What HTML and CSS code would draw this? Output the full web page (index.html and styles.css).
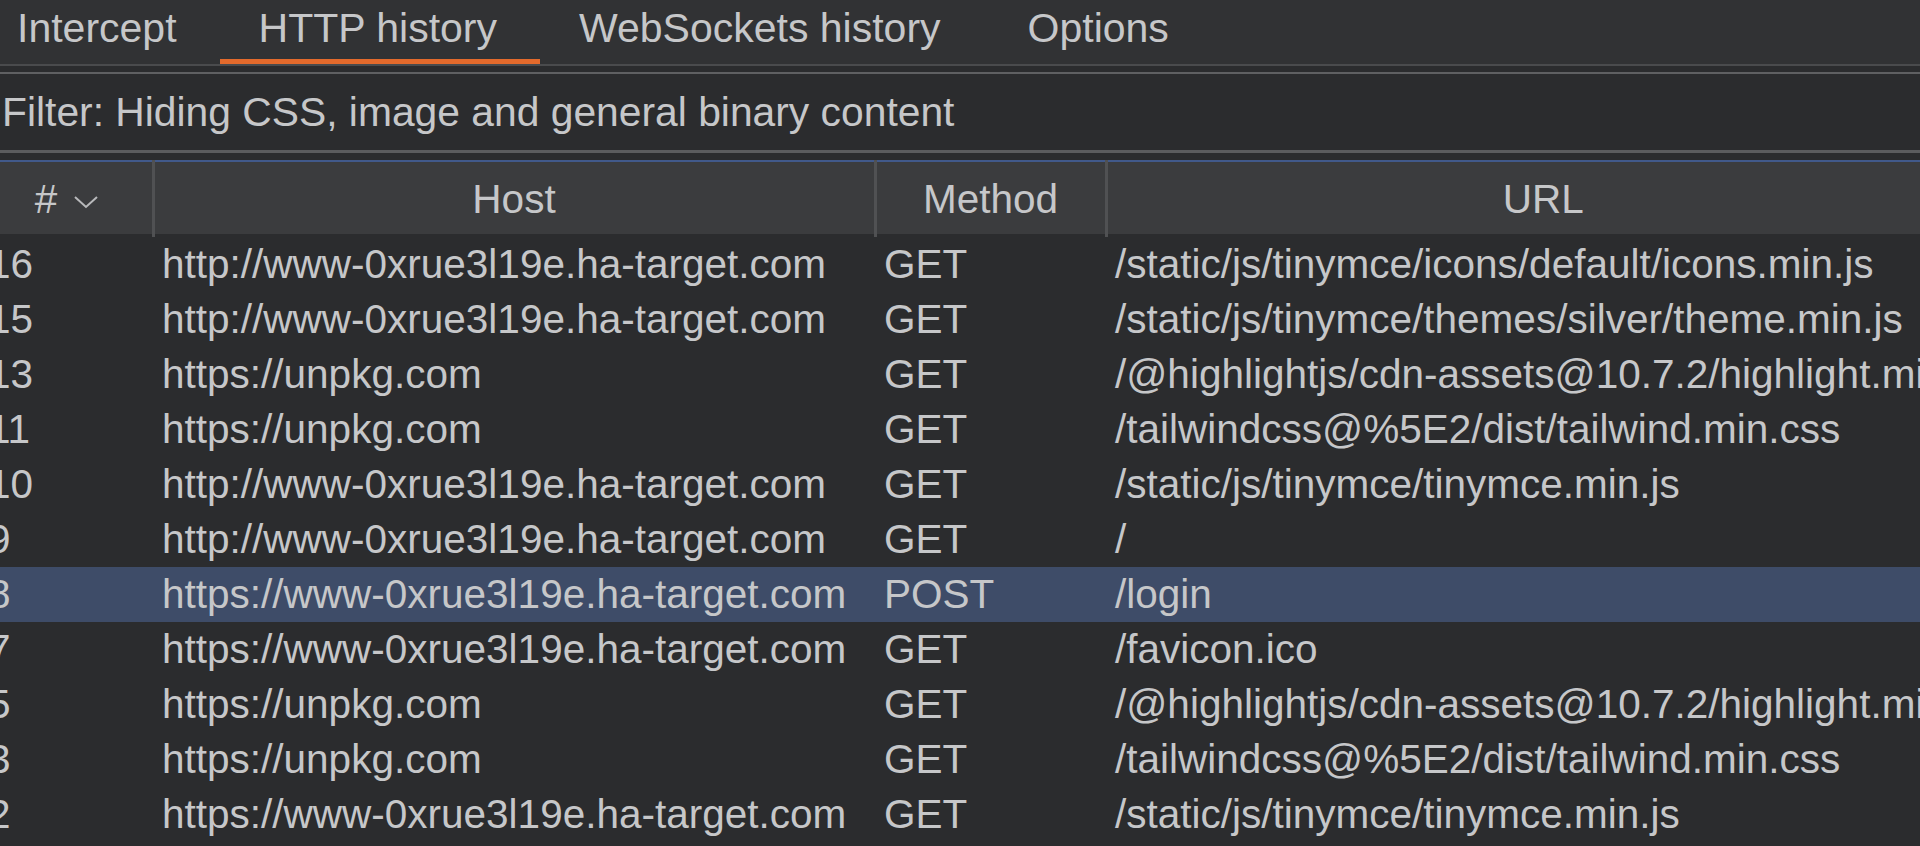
FILE: index.html
```html
<!DOCTYPE html>
<html lang="en">
<head>
  <meta charset="UTF-8">
  <title>HTTP history</title>
  <link rel="stylesheet" href="styles.css">
</head>
<body>

  <div class="tabs">
    <span class="tab">Intercept</span>
    <span class="tab active">HTTP history</span>
    <span class="tab">WebSockets history</span>
    <span class="tab">Options</span>
  </div>

  <div class="filter">Filter: Hiding CSS, image and general binary content</div>

  <table class="history">
    <colgroup>
      <col class="c-num">
      <col class="c-host">
      <col class="c-method">
      <col class="c-url">
    </colgroup>
    <thead>
      <tr>
        <th><span class="sort"># <svg width="26" height="14" viewBox="0 0 26 14"><polyline points="2,2 13,12 24,2" fill="none" stroke="#b8b9bb" stroke-width="2"/></svg></span></th>
        <th>Host</th>
        <th>Method</th>
        <th>URL</th>
      </tr>
    </thead>
    <tbody>
      <tr><td>16</td><td>http://www-0xrue3l19e.ha-target.com</td><td>GET</td><td>/static/js/tinymce/icons/default/icons.min.js</td></tr>
      <tr><td>15</td><td>http://www-0xrue3l19e.ha-target.com</td><td>GET</td><td>/static/js/tinymce/themes/silver/theme.min.js</td></tr>
      <tr><td>13</td><td>https://unpkg.com</td><td>GET</td><td>/@highlightjs/cdn-assets@10.7.2/highlight.min.js</td></tr>
      <tr><td>11</td><td>https://unpkg.com</td><td>GET</td><td>/tailwindcss@%5E2/dist/tailwind.min.css</td></tr>
      <tr><td>10</td><td>http://www-0xrue3l19e.ha-target.com</td><td>GET</td><td>/static/js/tinymce/tinymce.min.js</td></tr>
      <tr><td>9</td><td>http://www-0xrue3l19e.ha-target.com</td><td>GET</td><td>/</td></tr>
      <tr class="selected"><td>8</td><td>https://www-0xrue3l19e.ha-target.com</td><td>POST</td><td>/login</td></tr>
      <tr><td>7</td><td>https://www-0xrue3l19e.ha-target.com</td><td>GET</td><td>/favicon.ico</td></tr>
      <tr><td>5</td><td>https://unpkg.com</td><td>GET</td><td>/@highlightjs/cdn-assets@10.7.2/highlight.min.js</td></tr>
      <tr><td>3</td><td>https://unpkg.com</td><td>GET</td><td>/tailwindcss@%5E2/dist/tailwind.min.css</td></tr>
      <tr><td>2</td><td>https://www-0xrue3l19e.ha-target.com</td><td>GET</td><td>/static/js/tinymce/tinymce.min.js</td></tr>
    </tbody>
  </table>

</body>
</html>
```
FILE: styles.css
```css
body {
  margin: 0;
  height: 846px;
  overflow: hidden;
  background: #2b2c2e;
  color: #c6c7c9;
  font-family: 'Liberation Sans', Arial, sans-serif;
  font-size: 40.5px;
}

.tabs {
  display: flex;
  height: 64px;
  background: #313234;
  border-bottom: 2px solid #4a4b4d;
  margin-left: -23px;
  font-size: 41px;
}

.tab {
  padding: 0 43px 0 39px;
  line-height: 57px;
  white-space: nowrap;
  border-bottom: 5px solid transparent;
}

.tab:first-child {
  padding-left: 40px;
}

.tab.active {
  border-bottom-color: #e36a2c;
}

.tab:last-child {
  padding-left: 44px;
}

.filter {
  margin-top: 6px;
  height: 76px;
  line-height: 76px;
  padding-left: 2px;
  background: #2b2c2e;
  border-top: 2px solid #5f6062;
  border-bottom: 3px solid #5b5c5e;
  white-space: nowrap;
  font-size: 40.8px;
}

.history {
  margin-top: 7px;
  margin-left: -18px;
  width: 1997px;
  border-collapse: collapse;
  table-layout: fixed;
  border-top: 2px solid #41598a;
}

.c-num { width: 171px; }
.c-host { width: 722px; }
.c-method { width: 231px; }
.c-url { width: 873px; }

.history th {
  height: 70px;
  padding: 2px 0 0;
  font-weight: normal;
  background: #3b3c3e;
  border-left: 3px solid #505153;
  border-bottom: 2px solid #4e4f51;
  text-align: center;
  white-space: nowrap;
}

.history th:first-child {
  border-left: none;
}

.sort svg {
  vertical-align: middle;
  margin-left: 4px;
}

.history td {
  height: 55px;
  padding: 0 0 0 9px;
  white-space: nowrap;
  overflow: hidden;
}

.history td:first-child {
  padding-left: 6px;
}

.history tbody tr:first-child td {
  border-top: 3px solid #2b2c2e;
}

.history tr.selected td {
  background: #3e4c68;
}
```
